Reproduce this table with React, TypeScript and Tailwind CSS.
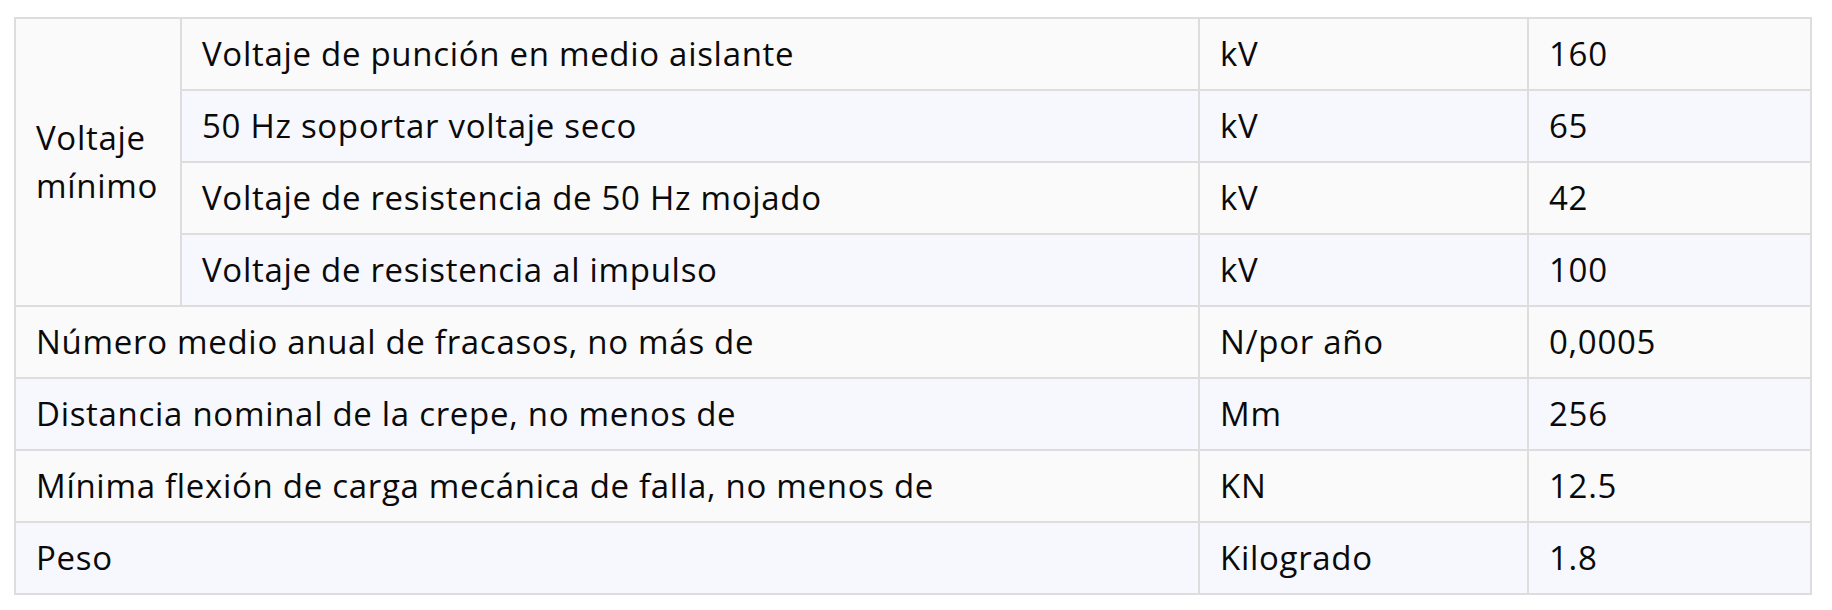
const voltageRows = [
  { item: "Voltaje de punción en medio aislante", unit: "kV", value: "160" },
  { item: "50 Hz soportar voltaje seco", unit: "kV", value: "65" },
  { item: "Voltaje de resistencia de 50 Hz mojado", unit: "kV", value: "42" },
  { item: "Voltaje de resistencia al impulso", unit: "kV", value: "100" },
];

const otherRows = [
  { item: "Número medio anual de fracasos, no más de", unit: "N/por año", value: "0,0005" },
  { item: "Distancia nominal de la crepe, no menos de", unit: "Mm", value: "256" },
  { item: "Mínima flexión de carga mecánica de falla, no menos de", unit: "KN", value: "12.5" },
  { item: "Peso", unit: "Kilogrado", value: "1.8" },
];

const cell = "h-[72px] border-2 border-[#dddddd] px-[20px] text-left align-middle font-normal";

export default function App() {
  return (
    <div className="min-h-screen bg-white pl-[14px] pt-[17px] font-['Open_Sans',sans-serif] text-[33px] leading-[48px] tracking-[0.7px] text-[#0a0a0a]">
      <table className="w-[1796px] table-fixed border-collapse">
        <colgroup>
          <col className="w-[166px]" />
          <col className="w-[1018px]" />
          <col className="w-[329px]" />
          <col className="w-[283px]" />
        </colgroup>
        <tbody>
          {voltageRows.map((row, i) => (
            <tr key={row.item} className={i % 2 === 0 ? "bg-[#fafafa]" : "bg-[#f7f8fd]"}>
              {i === 0 && (
                <td rowSpan={4} className={`${cell} bg-[#fafafa] px-[10px] text-center`}>
                  Voltaje mínimo
                </td>
              )}
              <td className={cell}>{row.item}</td>
              <td className={cell}>{row.unit}</td>
              <td className={cell}>{row.value}</td>
            </tr>
          ))}
          {otherRows.map((row, i) => (
            <tr key={row.item} className={i % 2 === 0 ? "bg-[#fafafa]" : "bg-[#f7f8fd]"}>
              <td colSpan={2} className={cell}>
                {row.item}
              </td>
              <td className={cell}>{row.unit}</td>
              <td className={cell}>{row.value}</td>
            </tr>
          ))}
        </tbody>
      </table>
    </div>
  );
}
